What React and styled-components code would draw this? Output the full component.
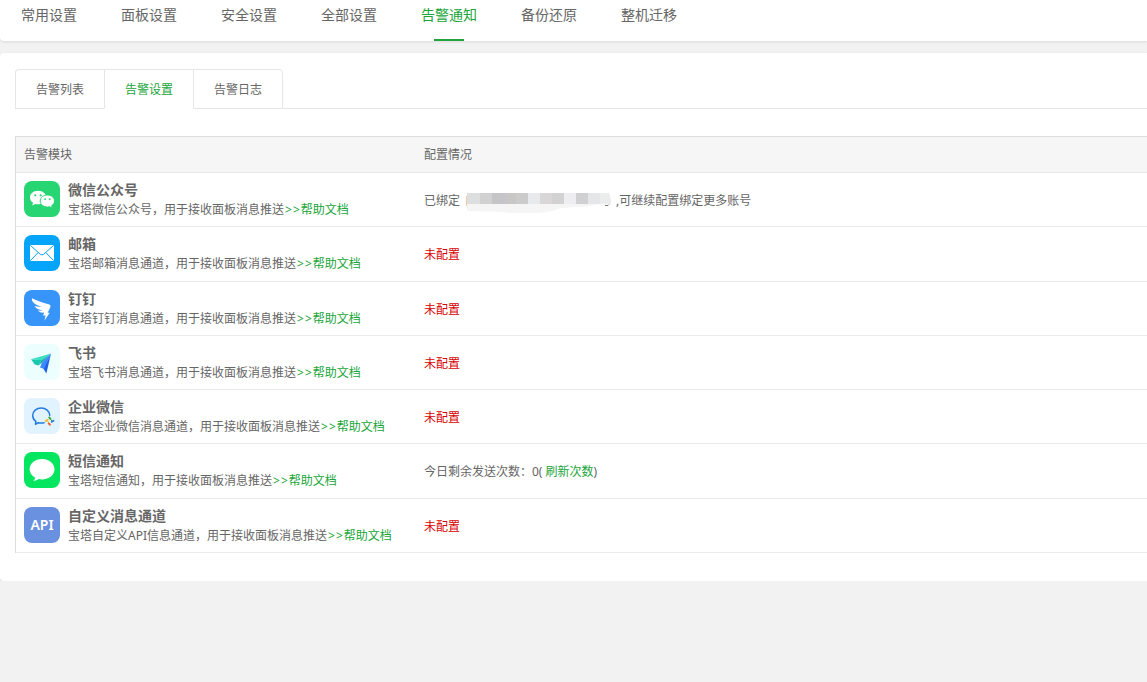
import React from "react";
import styled, { createGlobalStyle, css } from "styled-components";

const GREEN = "#20a53a";
const RED = "#d90000";

const GlobalStyle = createGlobalStyle`
  *, *::before, *::after { box-sizing: border-box; }
  body {
    margin: 0;
    background: #f2f2f2;
    color: #666;
    font-family: "Noto Sans", "Noto Sans CJK SC", sans-serif;
    font-size: 12px;
    overflow-x: hidden;
  }
`;

const card = css`
  background: #fff;
  border-radius: 4px 0 0 4px;
  box-shadow: 0 1px 3px rgba(0, 0, 0, 0.1);
`;

const TopNav = styled.nav`
  ${card}
  display: flex;
  gap: 44px;
  padding: 0 21px;
  border-top-left-radius: 0;
`;

const NavLink = styled.a`
  position: relative;
  padding-bottom: 11px;
  color: ${(p) => (p.$active ? GREEN : "#666")};
  font-size: 14px;
  line-height: 30px;
  text-decoration: none;
  white-space: nowrap;

  &::after {
    content: "";
    display: ${(p) => (p.$active ? "block" : "none")};
    position: absolute;
    bottom: 0;
    left: 13px;
    width: 30px;
    height: 2px;
    background: ${GREEN};
  }
`;

const Panel = styled.main`
  ${card}
  margin-top: 12px;
  padding: 16px 0 28px 15px;
`;

const TabBar = styled.div`
  display: flex;
  height: 40px;
`;

const Tab = styled.button`
  width: 89px;
  padding: 0;
  border: 1px solid #e6e6e6;
  border-right-width: 0;
  border-bottom-color: ${(p) => (p.$active ? "#fff" : "#e6e6e6")};
  background: #fff;
  color: ${(p) => (p.$active ? GREEN : "#666")};
  font: inherit;
  cursor: pointer;

  &:first-child { border-top-left-radius: 4px; }
  &:last-of-type {
    width: 90px;
    border-right-width: 1px;
    border-top-right-radius: 4px;
  }
`;

const TabRest = styled.div`
  flex: 1;
  border-bottom: 1px solid #e6e6e6;
`;

const Table = styled.table`
  width: 100%;
  margin-top: 27px;
  border: 1px solid #ddd;
  border-width: 1px 0 0 1px;
  border-spacing: 0;
  table-layout: fixed;
`;

const HeadCell = styled.th`
  width: ${(p) => p.$width || "auto"};
  height: 36px;
  padding: 0 8px 2px;
  border-bottom: 1px solid #e8e8e8;
  background: #f6f6f6;
  font-weight: 400;
  text-align: left;
`;

const Cell = styled.td`
  padding: 8px;
  border-bottom: 1px solid #ebebeb;
  line-height: 1.44;
  vertical-align: middle;
  white-space: nowrap;
`;

const StatusCell = styled(Cell)`
  padding-top: 10px;
`;

const Module = styled.div`
  display: flex;
  gap: 8px;
`;

const IconTile = styled.span`
  display: flex;
  flex: none;
  align-items: center;
  justify-content: center;
  width: 36px;
  height: 36px;
  border-radius: 8px;
  background: ${(p) => p.$color};
  color: #fff;
  font-size: 14px;
  font-weight: 600;
`;

const ModuleName = styled.div`
  padding-bottom: 2px;
  font-size: 14px;
  font-weight: 600;
  line-height: 18px;
`;

const HelpLink = styled.a`
  color: ${GREEN};
  text-decoration: none;
`;

const Arrow = styled.span`
  padding-left: 1px;
`;

const Missing = styled.span`
  color: ${RED};
`;

const Bound = styled.div`
  display: flex;
  align-items: center;
  gap: 5px;
`;

const RefreshButton = styled.button`
  padding: 0;
  border: 0;
  background: none;
  color: ${GREEN};
  font: inherit;
  cursor: pointer;
`;

const Svg = (props) => (
  <svg width="36" height="36" viewBox="0 0 36 36" aria-hidden="true" {...props} />
);

const WechatIcon = () => (
  <Svg>
    <path
      fill="#fff"
      d="M14 9.8c-4.6 0-8 2.9-8 6.6 0 2.2 1.100 4 3 5.200L8.300 24.500l3-1.600c.9.200 1.800.3 2.700.3 4.600 0 8.200-3 8.200-6.800S18.600 9.800 14 9.800z"
    />
    <path
      fill="#fff"
      stroke="#27d673"
      strokeWidth="1"
      d="M23.400 14c-4.100 0-7.200 2.700-7.200 6s3.100 6 7.200 6c.8 0 1.600-.1 2.300-.3l2.600 1.400-.6-2.500c1.700-1.100 2.800-2.700 2.800-4.600 0-3.300-3-6-7.100-6z"
    />
    <g fill="#27d673">
      <circle cx="11.200" cy="14.300" r="1.100" />
      <circle cx="16.700" cy="14.300" r="1.100" />
      <circle cx="21.100" cy="18.200" r=".9" />
      <circle cx="25.700" cy="18.200" r=".9" />
    </g>
  </Svg>
);

const MailIcon = () => (
  <Svg>
    <rect x="6" y="10" width="24" height="16" rx="1" fill="#fff" />
    <path
      fill="none"
      stroke="#04a4fa"
      strokeWidth="1"
      d="M6.500 10.500l9.700 8.700q1.800 1.500 3.600 0l9.700-8.700M6.500 25.500l7.700-8M29.500 25.500l-7.700-8"
    />
  </Svg>
);

const DingIcon = () => (
  <Svg>
    <path
      fill="#fff"
      d="M8 8.200c4.800 2.700 10.400 4.200 16.600 6.100 1.700.5 2.300 1.400 1.700 3-.7 1.900-1.700 3.700-2.700 5.500h2.100L20.400 30.800l1.200-5.400h-2.500l1-2.800c-2.500.4-4.400-.1-6.100-2 2 .1 3.500 0 4.500-.4-3.700-.3-6.500-1.500-8-4.100 2.700.7 5 .9 7.200.7-4.300-1.100-8-2.900-9.300-5.500-.5-1-.6-2-.4-3.100z"
    />
  </Svg>
);

const FeishuIcon = () => (
  <Svg>
    <path fill="#39dfc3" d="M7 15.200L27 9.600l-9.400 6.600z" />
    <path fill="#16c8ad" d="M7 15.200l10.600 1-3.200 5.400-3.600-1.200z" />
    <path fill="#0fae9a" d="M14.400 21.600l3.200-5.400L27 9.600l-9 8.800z" />
    <path fill="#3a8bff" d="M27 9.600L18 18.400l-2 5 4 1.600z" />
    <path fill="#1f62e5" d="M27 9.600l-4.600 19.800L19.600 25z" />
  </Svg>
);

const WecomIcon = () => (
  <Svg>
    <path
      fill="none"
      stroke="#257de0"
      strokeWidth="1.500"
      strokeLinecap="round"
      strokeLinejoin="round"
      d="M25.800 17.400C25.600 13.300 21.800 10 17.200 10 12.500 10 8.700 13.300 8.700 17.500c0 2.500 1.200 4.500 3.200 6l-.5 2.700 3-1.400c2.100.5 3.900.4 5.700-.1"
    />
    <g strokeWidth="1.900" strokeLinecap="round">
      <path stroke="#35ac36" d="M25.200 19.400l1.300 1.500" />
      <path stroke="#257de0" d="M29.500 22.800l-1.700 1" />
      <path stroke="#f45a2a" d="M25.900 26.700l-1.200-1.400" />
      <path stroke="#f8b72b" d="M21.800 22.900l1.600-.8" />
    </g>
    <path fill="none" stroke="#f8b72b" d="M24.500 21.500l-1.300 1.300 1.800 1.800" />
    <path fill="none" stroke="#35ac36" d="M26.500 21l1.300 2" />
  </Svg>
);

const SmsIcon = () => (
  <Svg>
    <path
      fill="#fff"
      d="M18 7.100c-7 0-12.400 4.500-12.400 10.200 0 3.500 2.100 6.500 5.500 8.300-.2 1.500-.8 2.500-1.800 3.400 2.200-.2 4.100-.9 5.400-2 1 .2 2.200.4 3.300.4 7 0 12.500-4.500 12.500-10.100S25 7.100 18 7.100z"
    />
  </Svg>
);

const mosaic = [
  [0, 13, "#dddee0"],
  [13, 12, "#d2d1d1"],
  [25, 15, "#c5c5c7"],
  [40, 9, "#c9c7c6"],
  [49, 12, "#cbcbcb"],
  [61, 12, "#e8e9ec"],
  [73, 12, "#d8d6d6"],
  [85, 12, "#d3d2d2"],
  [97, 12, "#ededf2"],
  [109, 12, "#d0d0d2"],
  [121, 12, "#e5e6e8"],
];

const MaskedAccount = () => (
  <svg width="146" height="24" viewBox="-1 -2 146 24" role="img" aria-label="***">
    <path fill="#f6c99a" d="M0 5h1v10H0z" />
    <path fill="#f5f5f6" d="M1 12h137c-14 4-29 4-43 5-10 4-17 5-28 5-8 1-18 1-24 0-7-2-25-1-42-2z" />
    <g transform="translate(1 2)">
      {mosaic.map(([x, w, fill]) => (
        <rect key={x} x={x} y="0" width={w} height="11" fill={fill} />
      ))}
      <path fill="#ebecec" d="M133 0h9l2 6v5h-11z" />
    </g>
    <path fill="none" stroke="#777" d="M139 14.500h3l1-1" />
  </svg>
);

const navItems = ["常用设置", "面板设置", "安全设置", "全部设置", "告警通知", "备份还原", "整机迁移"];
const tabs = ["告警列表", "告警设置", "告警日志"];

const missing = <Missing>未配置</Missing>;

const modules = [
  {
    name: "微信公众号",
    text: "宝塔微信公众号，用于接收面板消息推送",
    color: "#27d673",
    icon: <WechatIcon />,
    status: (
      <Bound>
        已绑定
        <MaskedAccount />
        <span>,可继续配置绑定更多账号</span>
      </Bound>
    ),
  },
  { name: "邮箱", text: "宝塔邮箱消息通道，用于接收面板消息推送", color: "#04a4fa", icon: <MailIcon />, status: missing },
  { name: "钉钉", text: "宝塔钉钉消息通道，用于接收面板消息推送", color: "#3795f9", icon: <DingIcon />, status: missing },
  { name: "飞书", text: "宝塔飞书消息通道，用于接收面板消息推送", color: "#ecfffe", icon: <FeishuIcon />, status: missing },
  { name: "企业微信", text: "宝塔企业微信消息通道，用于接收面板消息推送", color: "#e0f3ff", icon: <WecomIcon />, status: missing },
  {
    name: "短信通知",
    text: "宝塔短信通知，用于接收面板消息推送",
    color: "#04e65f",
    icon: <SmsIcon />,
    status: (
      <>
        今日剩余发送次数：0( <RefreshButton type="button">刷新次数</RefreshButton>)
      </>
    ),
  },
  { name: "自定义消息通道", text: "宝塔自定义API信息通道，用于接收面板消息推送", color: "#6a90e0", icon: "API", status: missing },
];

export default function App() {
  return (
    <>
      <GlobalStyle />
      <TopNav>
        {navItems.map((item) => (
          <NavLink key={item} href="#" $active={item === "告警通知"}>
            {item}
          </NavLink>
        ))}
      </TopNav>
      <Panel>
        <TabBar>
          {tabs.map((tab) => (
            <Tab key={tab} type="button" $active={tab === "告警设置"}>
              {tab}
            </Tab>
          ))}
          <TabRest />
        </TabBar>
        <Table>
          <thead>
            <tr>
              <HeadCell $width="400px">告警模块</HeadCell>
              <HeadCell>配置情况</HeadCell>
            </tr>
          </thead>
          <tbody>
            {modules.map((m) => (
              <tr key={m.name}>
                <Cell>
                  <Module>
                    <IconTile $color={m.color}>{m.icon}</IconTile>
                    <div>
                      <ModuleName>{m.name}</ModuleName>
                      <div>
                        {m.text}
                        <HelpLink href="#">
                          <Arrow>&gt;</Arrow>
                          <Arrow>&gt;</Arrow>
                          <Arrow>帮助文档</Arrow>
                        </HelpLink>
                      </div>
                    </div>
                  </Module>
                </Cell>
                <StatusCell>{m.status}</StatusCell>
              </tr>
            ))}
          </tbody>
        </Table>
      </Panel>
    </>
  );
}
